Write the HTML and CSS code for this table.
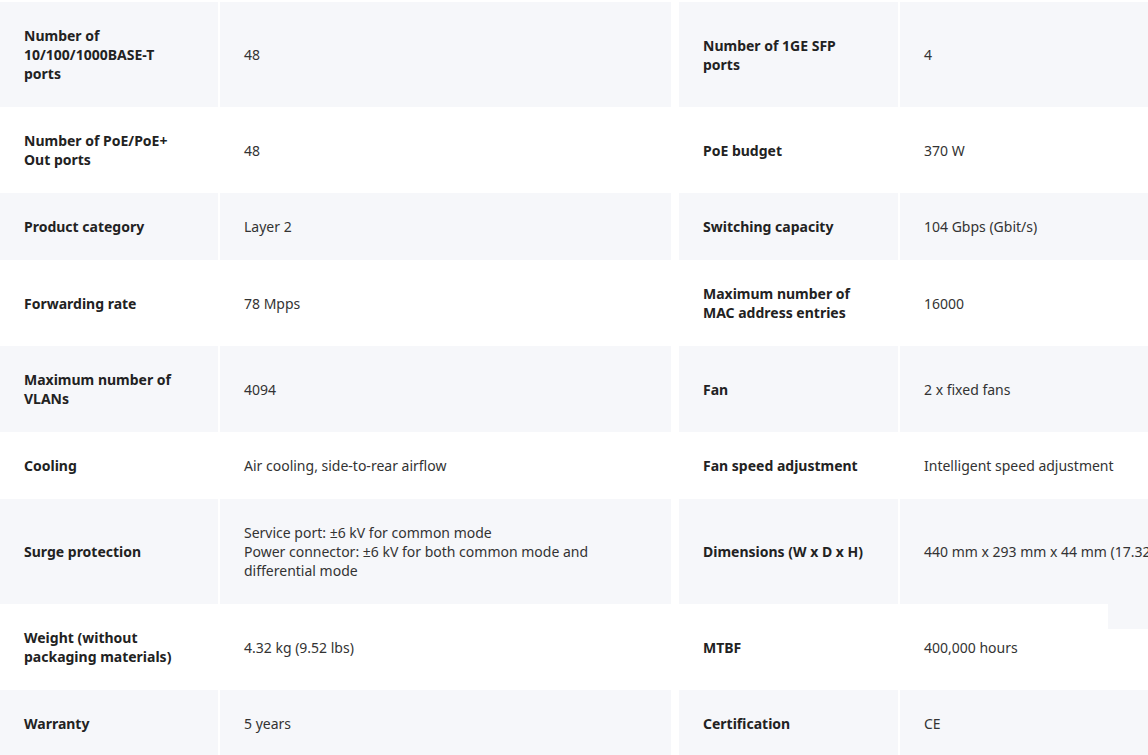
FILE: index.html
```html
<!DOCTYPE html>
<html>
<head>
    <title>Specifications</title>
    <meta name="viewport" content="width=device-width, initial-scale=1.0">
    <link rel="stylesheet" href="styles.css">
</head>
<body>
    <div class="specs">
        <div class="row">
            <div class="label">Number of 10/100/1000BASE-T ports</div>
            <div class="value">48</div>
            <div class="label right">Number of 1GE SFP ports</div>
            <div class="value">4</div>
        </div>
        <div class="row">
            <div class="label">Number of PoE/PoE+ Out ports</div>
            <div class="value">48</div>
            <div class="label right">PoE budget</div>
            <div class="value">370 W</div>
        </div>
        <div class="row">
            <div class="label">Product category</div>
            <div class="value">Layer 2</div>
            <div class="label right">Switching capacity</div>
            <div class="value">104 Gbps (Gbit/s)</div>
        </div>
        <div class="row">
            <div class="label">Forwarding rate</div>
            <div class="value">78 Mpps</div>
            <div class="label right">Maximum number of MAC address entries</div>
            <div class="value">16000</div>
        </div>
        <div class="row">
            <div class="label">Maximum number of VLANs</div>
            <div class="value">4094</div>
            <div class="label right">Fan</div>
            <div class="value">2 x fixed fans</div>
        </div>
        <div class="row">
            <div class="label">Cooling</div>
            <div class="value">Air cooling, side-to-rear airflow</div>
            <div class="label right">Fan speed adjustment</div>
            <div class="value">Intelligent speed adjustment</div>
        </div>
        <div class="row">
            <div class="label">Surge protection</div>
            <div class="value">Service port: ±6 kV for common mode<br>Power connector: ±6 kV for both common mode and differential mode</div>
            <div class="label right">Dimensions (W x D x H)</div>
            <div class="value nowrap">440 mm x 293 mm x 44 mm (17.32 in. x 11.54 in. x 1.73 in.)</div>
        </div>
        <div class="row">
            <div class="label">Weight (without packaging materials)</div>
            <div class="value">4.32 kg (9.52 lbs)</div>
            <div class="label right">MTBF</div>
            <div class="value mtbf">400,000 hours<span class="edge-tab"></span></div>
        </div>
        <div class="row">
            <div class="label">Warranty</div>
            <div class="value">5 years</div>
            <div class="label right">Certification</div>
            <div class="value">CE</div>
        </div>
    </div>
</body>
</html>
```

FILE: styles.css
```css
* {
    margin: 0;
    padding: 0;
    box-sizing: border-box;
}

body {
    background: #fff;
    font-family: "Noto Sans", "Open Sans", Arial, sans-serif;
    font-size: 14px;
    line-height: 19px;
    overflow: hidden;
    width: 1148px;
}

.specs {
    display: grid;
    grid-template-columns: 218px 451px 225px 450px;
    column-gap: 2px;
    padding-top: 2px;
    width: 1352px;
}

.row {
    display: contents;
}

.row > div {
    display: flex;
    align-items: center;
    padding: 24px;
    background: #fff;
}

.row:nth-child(odd) > div {
    background: #f6f7fa;
}

.label {
    font-weight: 700;
    color: #222;
}

.label.right {
    margin-left: 6px;
}

.value {
    color: #333;
}

.nowrap {
    white-space: nowrap;
}

.mtbf {
    position: relative;
}

.edge-tab {
    position: absolute;
    left: 208px;
    top: 0;
    width: 60px;
    height: 25px;
    background: #f6f7fa;
}
```
